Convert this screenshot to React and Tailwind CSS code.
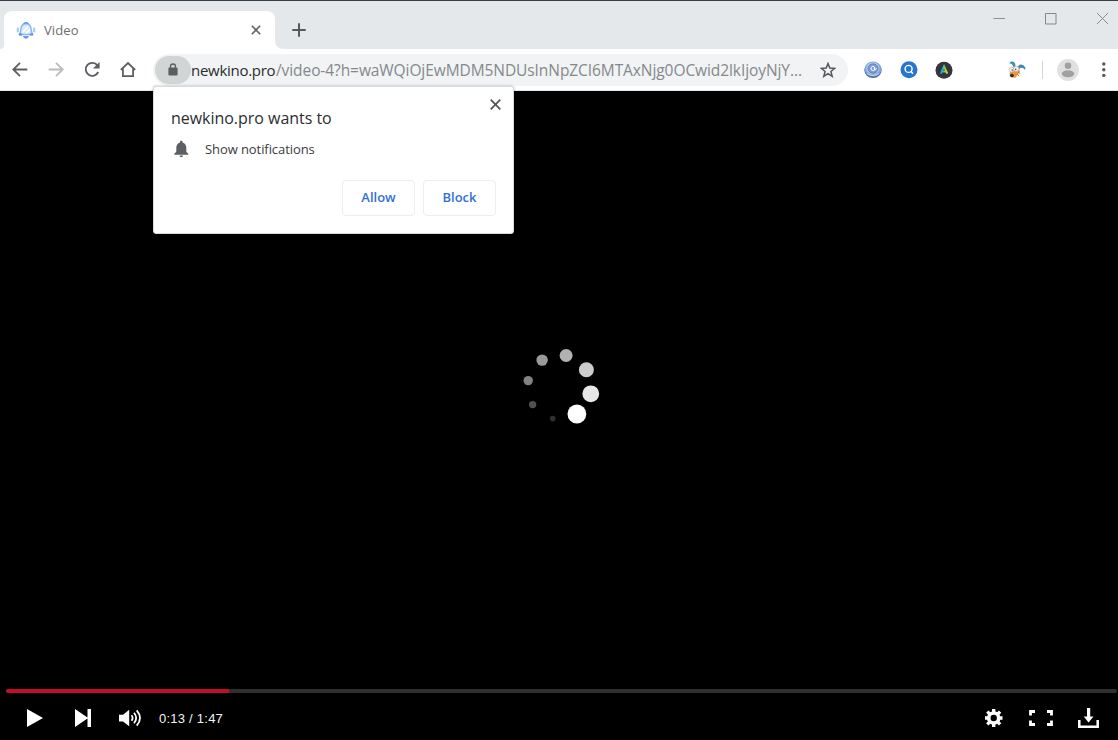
import React from "react";

const PATH = "/video-4?h=waWQiOjEwMDM5NDUsInNpZCI6MTAxNjg0OCwid2lkIjoyNjY...";

const DOTS = [
  { x: 56.1, y: 21, r: 6.5, fill: "#b2b2b2" },
  { x: 32.1, y: 25.6, r: 5.7, fill: "#999999" },
  { x: 18.2, y: 46.1, r: 4.7, fill: "#828282" },
  { x: 22.6, y: 70.1, r: 3.7, fill: "#515151" },
  { x: 42.7, y: 84.1, r: 2.8, fill: "#303030" },
  { x: 66.9, y: 79.5, r: 9.4, fill: "#ffffff" },
  { x: 80.8, y: 59.3, r: 8.4, fill: "#e7e7e7" },
  { x: 76.4, y: 35.2, r: 7.5, fill: "#cccccc" },
];

function Slot({ children }) {
  return <div className="flex h-9 w-9 shrink-0 items-center justify-center">{children}</div>;
}

function Glyph({ children, className = "" }) {
  return (
    <svg width="20" height="20" viewBox="0 0 20 20" fill="none" className={className}>
      {children}
    </svg>
  );
}

function BellFavicon() {
  return (
    <svg width="20" height="18" viewBox="0 0 20 18" fill="none" className="shrink-0">
      <path d="M1.800 7.500v3M18.200 7.500v3" stroke="#a9cbfa" strokeWidth="2.200" strokeLinecap="round" />
      <path d="M3.400 13.500c1.200-1.500 1.300-3 1.500-5.500C5.200 4.500 7 2.700 10 2.700s4.800 1.800 5.100 5.300c.2 2.500.3 4 1.500 5.500z" fill="#dceafd" stroke="#8ab5f2" strokeWidth="1.500" strokeLinejoin="round" />
      <path d="M6.500 11.500L12 5.500M10 12.500l4-4.500" stroke="#ffffff" strokeWidth="1.400" />
      <path d="M7.500 2.800Q10 .2 12.500 2.800" fill="#649ceb" stroke="#649ceb" strokeWidth="1.200" />
      <path d="M7.500 15.500h5l-1.300 1.600H8.800z" fill="#649ceb" stroke="#649ceb" strokeWidth="1" />
      <path d="M2.800 13.500h3.400M13.800 13.500h3.400" stroke="#5b93e5" strokeWidth="2.200" />
    </svg>
  );
}

function TabStrip() {
  return (
    <div className="flex h-12 items-end bg-[#e5e8eb] pt-2.5">
      <div className="h-2 w-1 shrink-0 bg-white">
        <div className="h-2 w-1 rounded-br-[4px] bg-[#e5e8eb]" />
      </div>
      <div className="flex h-[38px] w-[271px] items-center rounded-t-lg bg-white pl-3">
        <BellFavicon />
        <span className="ml-2 flex-1 text-[13px] leading-5 tracking-[0.12px] text-[#6b6e71]">Video</span>
        <svg width="10" height="10" viewBox="0 0 10 10" className="mr-[14px]">
          <path d="M.8.8l8.400 8.400M9.200.8L.8 9.200" stroke="#5f6368" strokeWidth="1.600" />
        </svg>
      </div>
      <div className="h-2 w-2 bg-white">
        <div className="h-2 w-2 rounded-bl-lg bg-[#e5e8eb]" />
      </div>
      <div className="ml-[9px] flex h-[38px] items-center">
        <svg width="14" height="14" viewBox="0 0 14 14">
          <path d="M7 .3v13.400M.3 7h13.400" stroke="#55595d" strokeWidth="2" />
        </svg>
      </div>
      <div className="ml-auto flex h-[38px] items-start gap-[39px] pr-[9px] pt-[1px]">
        <svg width="12" height="13" viewBox="0 0 12 13">
          <path d="M.5 6.500H12" stroke="#8d9093" />
        </svg>
        <svg width="13" height="13" viewBox="0 0 13 13" fill="none">
          <path d="M1.500 1.500h10.500v10.500H1.500z" stroke="#858789" />
        </svg>
        <svg width="13" height="13" viewBox="0 0 13 13">
          <path d="M1 1l11 11M12 1L1 12" stroke="#8a8c8f" />
        </svg>
      </div>
    </div>
  );
}

function AddressBar() {
  return (
    <div className="ml-[7px] flex h-8 w-[695px] items-center rounded-full bg-[#f1f3f4]">
      <div className="ml-0.5 flex h-[28px] w-9 items-center justify-center rounded-full bg-[#d2d5d5]">
        <svg width="10" height="13" viewBox="0 0 10 13">
          <path d="M2.500 5V3.500a2.500 2.500 0 0 1 5 0V5" fill="none" stroke="#5b5e61" strokeWidth="1.300" />
          <rect x=".4" y="4.500" width="9.200" height="8" rx="1.200" fill="#5b5e61" />
        </svg>
      </div>
      <div className="flex w-[620px] items-baseline whitespace-nowrap leading-6">
        <span className="w-[85px] text-[15px] tracking-[-0.28px] text-[#2b2d30]">newkino.pro</span>
        <span className="text-[15.5px] tracking-[-0.08px] text-[#85898c]">{PATH}</span>
      </div>
      <svg width="16" height="16" viewBox="0 0 16 16" className="ml-[9px]" fill="none">
        <path d="M8 1.500l1.800 4.600 4.900.3-3.800 3.100 1.300 4.800L8 11.600l-4.200 2.700 1.300-4.800L1.300 6.400l4.900-.3z" stroke="#55585c" strokeWidth="1.500" />
      </svg>
    </div>
  );
}

function Toolbar() {
  return (
    <div className="flex h-[42px] items-center border-b border-[#e4e5e6] bg-white pl-0.5">
      <Slot>
        <Glyph>
          <path d="M17.300 9.500H3.500M10 2.800L3.300 9.500l6.700 6.700" stroke="#5c5f63" strokeWidth="1.800" />
        </Glyph>
      </Slot>
      <Slot>
        <Glyph>
          <path d="M2.700 9.500h13.800M10 2.800l6.700 6.700-6.700 6.700" stroke="#b9bbbd" strokeWidth="1.800" />
        </Glyph>
      </Slot>
      <Slot>
        <Glyph>
          <path d="M15.400 5.400A6.500 6.500 0 1 0 16.200 12" stroke="#5c5f63" strokeWidth="1.900" />
          <path d="M17.600 2v6.600H11z" fill="#5c5f63" />
        </Glyph>
      </Slot>
      <Slot>
        <Glyph>
          <path d="M2.800 9.800L10 3l7.200 6.800M4.900 8.500v7.700h10.200V8.500" stroke="#5c5f63" strokeWidth="1.800" />
        </Glyph>
      </Slot>
      <AddressBar />
      <div className="ml-[7px] flex">
        <Slot>
          <Glyph>
            <ellipse cx="10" cy="10.500" rx="8.600" ry="7.600" fill="#4668a8" />
            <ellipse cx="10" cy="9" rx="8.500" ry="7.500" fill="#7da2d6" />
            <ellipse cx="9.800" cy="8.200" rx="6.700" ry="5.900" fill="#b4cbea" />
            <ellipse cx="10" cy="8.500" rx="5" ry="4.600" fill="#7c9fd2" stroke="#597fbe" strokeWidth="1" />
            <path d="M12 8.500a2 2 0 1 1-.6-1.500V9c0 1.500 2 1 1.800-.8" stroke="#fff" strokeWidth="1" />
            <path d="M4 13.500q6 4 12 0" stroke="#c9daf0" strokeWidth="1" />
          </Glyph>
        </Slot>
        <Slot>
          <Glyph>
            <circle cx="10" cy="9.700" r="8.500" fill="#2776cc" />
            <circle cx="9.600" cy="8.900" r="3.500" stroke="#fff" strokeWidth="1.400" />
            <path d="M11.900 11.300l2 2.400" stroke="#fff" strokeWidth="1.600" />
          </Glyph>
        </Slot>
        <Slot>
          <Glyph className="mr-0.5">
            <defs>
              <linearGradient id="letterGlow" x1="6" y1="12" x2="14" y2="12" gradientUnits="userSpaceOnUse">
                <stop offset="0" stopColor="#2485e8" />
                <stop offset=".4" stopColor="#2fc3b0" />
                <stop offset=".75" stopColor="#b7d92a" />
                <stop offset="1" stopColor="#ead42b" />
              </linearGradient>
            </defs>
            <circle cx="10" cy="10.200" r="8.500" fill="#35363c" />
            <path d="M6.700 13.600L10 6.300l3.300 7.300M8.200 11.500h4" stroke="url(#letterGlow)" strokeWidth="1.900" />
          </Glyph>
        </Slot>
        <div className="w-9" />
        <Slot>
          <Glyph>
            <path d="M2 3.200C5-.2 8.700 1.500 8.500 6.500L6.300 7C6 4.500 4.500 3.500 2 3.200z" fill="#3d8db8" />
            <path d="M10.500 8c.6-4.500 5.500-5 8-.2l-.5 2c-2-2.500-4-2.700-6-.6z" fill="#3f88b4" />
            <path d="M4 8l7-2 2 5.500-4.500 6.300-4-.4-2-3.500z" fill="#ee9440" />
            <ellipse cx="4.500" cy="9.700" rx="2.500" ry="2.400" fill="#f4f5f5" stroke="#b5aba0" strokeWidth=".6" />
            <ellipse cx="9.200" cy="8.800" rx="2.700" ry="2.600" fill="#f4f5f5" stroke="#b5aba0" strokeWidth=".6" />
            <circle cx="5.200" cy="10" r=".7" fill="#332d2d" />
            <circle cx="8.700" cy="9.300" r=".7" fill="#332d2d" />
            <ellipse cx="4.900" cy="15.500" rx="2" ry="1.700" fill="#3f2d2b" />
            <path d="M11 12l2.300 1.500M10 14l2 1.800" stroke="#cb6d22" strokeWidth="1" />
          </Glyph>
        </Slot>
      </div>
      <div className="ml-[7px] h-[18px] w-px bg-[#d3d5d7]" />
      <svg width="22" height="22" viewBox="0 0 22 22" className="ml-[14px]">
        <circle cx="11" cy="11" r="10.900" fill="#e0e0e0" />
        <circle cx="11" cy="6.700" r="3.300" fill="#a0a0a0" />
        <ellipse cx="11" cy="14.700" rx="6.300" ry="3.500" fill="#a0a0a0" />
      </svg>
      <svg width="4" height="16" viewBox="0 0 4 16" className="ml-[23px]" fill="#55585c">
        <circle cx="1.800" cy="2" r="1.700" />
        <circle cx="1.800" cy="7.700" r="1.700" />
        <circle cx="1.800" cy="13.400" r="1.700" />
      </svg>
    </div>
  );
}

function PermissionPopup() {
  return (
    <div className="absolute left-[153px] top-[85px] h-[148px] w-[361px] rounded-[3px] border border-[#d9dadb] bg-white px-[17px] pt-[18px] shadow-[0_0_3px_rgba(0,0,0,0.25)]">
      <button className="absolute right-[12px] top-[12px]" aria-label="Close">
        <svg width="11" height="11" viewBox="0 0 11 11">
          <path d="M.7.7l9.600 9.600M10.300.7L.7 10.300" stroke="#505357" strokeWidth="1.700" />
        </svg>
      </button>
      <h1 className="text-[16px] leading-[26px] tracking-[-0.03px] text-[#2c2e31]">newkino.pro wants to</h1>
      <div className="mt-[8px] flex h-5 items-center">
        <svg width="20" height="18" viewBox="0 0 20 18" fill="#5c5f63">
          <path d="M10.300.8c.8 0 1.300.5 1.300 1.300v.4c2.500.7 3.700 2.700 3.700 5.200v4l2 2v1h-14v-1l2-2v-4c0-2.500 1.200-4.500 3.700-5.200v-.4C9 1.300 9.500.8 10.300.8zM8.600 15.500H12c0 1-.7 1.700-1.700 1.700s-1.700-.7-1.700-1.700z" />
        </svg>
        <span className="ml-[14px] text-[13px] leading-5 tracking-[-0.08px] text-[#393b3e]">Show notifications</span>
      </div>
      <div className="mt-[21px] flex justify-end gap-2 text-[13px] font-semibold text-[#3270d2]">
        <button className="h-9 w-[73px] rounded-[4px] border border-[#ebedef]">Allow</button>
        <button className="h-9 w-[73px] rounded-[4px] border border-[#ebedef]">Block</button>
      </div>
    </div>
  );
}

function Spinner() {
  return (
    <svg width="110" height="100" viewBox="-6 5.5 110 100">
      {DOTS.map((d) => (
        <circle key={d.fill} cx={d.x} cy={d.y} r={d.r} fill={d.fill} />
      ))}
    </svg>
  );
}

function Player() {
  return (
    <main className="flex flex-1 flex-col bg-black">
      <div className="flex flex-1 items-center justify-center">
        <Spinner />
      </div>
      <div className="ml-1.5 mr-px flex h-1 rounded-full bg-[#303030]">
        <div className="h-full w-[223px] rounded-l-full bg-[#c40e26]" />
      </div>
      <div className="flex h-[47px] items-center pl-[27px] pr-[19px] pt-0.5">
        <svg width="16" height="18" viewBox="0 0 16 18" fill="#fff">
          <path d="M0 0l16 9-16 9z" />
        </svg>
        <svg width="17" height="18" viewBox="0 0 17 18" fill="#fff" className="ml-[32px]">
          <path d="M0 0l12.500 8.500V0H16v18h-3.500V9.500L0 18z" />
        </svg>
        <svg width="24" height="18" viewBox="0 0 24 18" fill="none" className="ml-[26px]">
          <path d="M1 5.800h4L11.200.8v16.400L5 12.500H1z" fill="#fff" />
          <path d="M13.500 6.200q2.200 2.800 0 5.600M16 3.700q4.300 5.300 0 10.600M18.700 1.400q6.600 7.600 0 15.200" stroke="#fff" strokeWidth="1.800" />
        </svg>
        <span className="ml-[17px] pt-0.5 font-['Liberation_Sans',sans-serif] text-[13px] tracking-[0.24px] text-[#f3f3f3]">0:13 / 1:47</span>
        <svg width="18" height="18" viewBox="0 0 18 18" className="ml-auto">
          <g fill="none" stroke="#fff">
            <circle cx="8.700" cy="9" r="5" strokeWidth="3.600" />
            <path d="M8.700 0v3.500M8.700 14.500V18M0 9h3.200M14.200 9h3.300M2.300 2.600l2.500 2.500M12.600 12.900l2.500 2.500M15.100 2.600l-2.500 2.500M4.800 12.900l-2.500 2.500" strokeWidth="3.400" />
          </g>
        </svg>
        <svg width="24" height="16" viewBox="0 0 24 16" fill="none" className="ml-[26px]">
          <path d="M6 1.500H1.500v4M18 1.500h4.500v4M6 14.500H1.500v-4M18 14.500h4.500v-4" stroke="#fff" strokeWidth="2.800" />
        </svg>
        <svg width="21" height="20" viewBox="0 0 21 20" fill="none" className="ml-[25px]">
          <path d="M1.300 12v6.700h18.400V12" stroke="#fff" strokeWidth="2.500" />
          <path d="M9 0h3.200v8.500H15.500l-4.900 6-4.900-6H9z" fill="#fff" />
        </svg>
      </div>
    </main>
  );
}

export default function App() {
  return (
    <div className="relative flex h-[740px] w-[1118px] flex-col overflow-hidden border-t border-[#3b3d43] bg-white font-['Open_Sans','Noto_Sans',sans-serif]">
      <TabStrip />
      <Toolbar />
      <Player />
      <PermissionPopup />
    </div>
  );
}
